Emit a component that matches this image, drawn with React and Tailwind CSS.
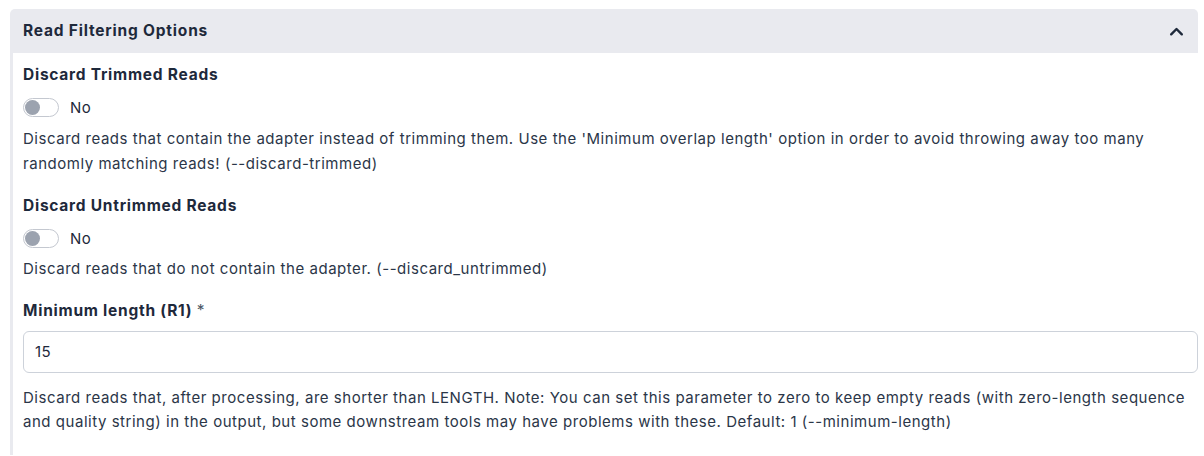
import { useState } from 'react'

const Toggle = ({ checked, onChange }) => (
  <button
    type="button"
    onClick={() => onChange(!checked)}
    className="flex items-center gap-[11px] h-[19px]"
  >
    <span
      className={
        checked
          ? 'relative w-[36px] h-[19px] rounded-full border border-[#2563eb] bg-[#2563eb]'
          : 'relative w-[36px] h-[19px] rounded-full border border-[#c4c8d0] bg-white'
      }
    >
      <span
        className={
          checked
            ? 'absolute top-[1px] left-[18px] w-[15px] h-[15px] rounded-full bg-white'
            : 'absolute top-[1px] left-[1px] w-[15px] h-[15px] rounded-full bg-[#9ca3af]'
        }
      />
    </span>
    <span className="text-[15px] leading-[19px] tracking-[0.5px] text-[#1e293b]">{checked ? 'Yes' : 'No'}</span>
  </button>
)

const Field = ({ label, children, help, className = '' }) => (
  <div className={className}>
    <div className="text-[15.5px] leading-[22px] font-bold tracking-[0.75px] text-[#1e293b]">{label}</div>
    {children}
    <p className="text-[15px] leading-[24.5px] tracking-[0.53px] text-[#2b3648]">{help}</p>
  </div>
)

export default function App() {
  const [open, setOpen] = useState(true)
  const [trimmed, setTrimmed] = useState(false)
  const [untrimmed, setUntrimmed] = useState(false)
  const [minLength, setMinLength] = useState('15')

  return (
    <div
      className="bg-white min-h-screen pl-[10px] pr-[6px] pt-[9px]"
      style={{ fontFamily: 'Inter, "Noto Sans", sans-serif' }}
    >
      <button
        type="button"
        onClick={() => setOpen(!open)}
        className="w-full h-[44px] bg-[#e9eaef] rounded-t-[5px] pl-[13px] pr-[13px] flex items-center justify-between"
      >
        <span className="text-[15.5px] font-bold tracking-[0.8px] text-[#1e293b]">Read Filtering Options</span>
        <svg width="17" height="17" viewBox="0 0 24 24" fill="none" stroke="#1e293b" strokeWidth="3.4" strokeLinecap="round" strokeLinejoin="round">
          <path d={open ? 'M4.5 16l7.5-7.5 7.5 7.5' : 'M4.5 8.5l7.5 7.5 7.5-7.5'} />
        </svg>
      </button>

      {open && (
        <div className="border-l-[3px] border-[#e9eaef] pl-[10px] pt-[11px] pb-[20px]">
          <Field
            label="Discard Trimmed Reads"
            help="Discard reads that contain the adapter instead of trimming them. Use the 'Minimum overlap length' option in order to avoid throwing away too many randomly matching reads! (--discard-trimmed)"
          >
            <div className="mt-[12px] mb-[10px]">
              <Toggle checked={trimmed} onChange={setTrimmed} />
            </div>
          </Field>

          <Field
            className="mt-[19px]"
            label="Discard Untrimmed Reads"
            help="Discard reads that do not contain the adapter. (--discard_untrimmed)"
          >
            <div className="mt-[12px] mb-[9px]">
              <Toggle checked={untrimmed} onChange={setUntrimmed} />
            </div>
          </Field>

          <Field
            className="mt-[18px]"
            label={
              <>
                Minimum length (R1) <span className="font-normal text-[#4b5563]">*</span>
              </>
            }
            help="Discard reads that, after processing, are shorter than LENGTH. Note: You can set this parameter to zero to keep empty reads (with zero-length sequence and quality string) in the output, but some downstream tools may have problems with these. Default: 1 (--minimum-length)"
          >
            <input
              type="text"
              value={minLength}
              onChange={(e) => setMinLength(e.target.value)}
              className="mt-[9px] mb-[13px] w-full h-[42px] px-[11px] rounded-[6px] border border-[#cdd2da] text-[15px] tracking-[0.5px] text-[#1e293b] focus:outline-none"
            />
          </Field>
        </div>
      )}
    </div>
  )
}
